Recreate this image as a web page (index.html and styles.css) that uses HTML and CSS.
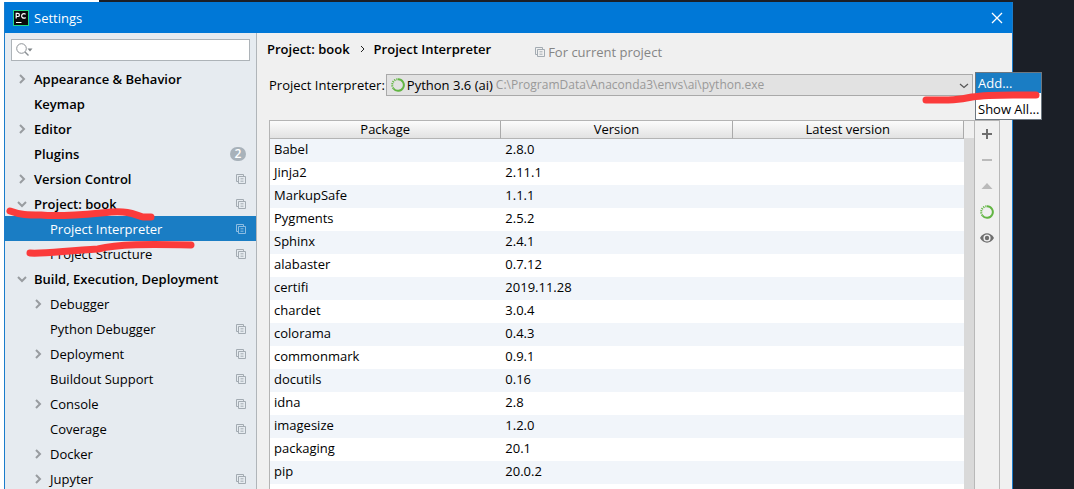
FILE: index.html
```
<!DOCTYPE html>
<html lang="en">
<head>
<meta charset="utf-8">
<title>Settings</title>
<link rel="stylesheet" href="styles.css">
</head>
<body>
<svg class="defs" aria-hidden="true">
  <symbol id="right" viewBox="0 0 10 10"><path d="M3 1l4 4-4 4" fill="none" stroke="#989ca0" stroke-width="2"/></symbol>
  <symbol id="down" viewBox="0 0 10 10"><path d="M1 3l4 4 4-4" fill="none" stroke="#989ca0" stroke-width="2"/></symbol>
  <symbol id="copy" viewBox="0 0 10 10"><path d="M2.5 7.5h-2v-7h7v2M2.5 2.5h7v7h-7zM4.5 4.8h3M4.5 7.2h3" fill="none" stroke="currentColor"/></symbol>
  <symbol id="ring" viewBox="0 0 14 14"><path d="M7 1.2a5.8 5.8 0 1 1-4.6 9.3" fill="none" stroke="#62b543" stroke-width="2"/><path d="M2.4 10.5A5.8 5.8 0 0 1 7 1.2" fill="none" stroke="#62b543" stroke-width="2" stroke-dasharray="1.2 1"/></symbol>
</svg>
<div class="desktop">
  <div class="strip"></div>
  <div class="window">
    <header class="titlebar">
      <svg class="logo" viewBox="0 0 16 16" aria-hidden="true"><rect width="16" height="16" fill="#21d789"/><rect x="1" y="1" width="14" height="14" fill="#0b0b0b"/><path d="M3.2 8.5V3.3h1.6a1.5 1.5 0 0 1 0 3.2H3.2M12.6 4.3a2.3 2.3 0 1 0 0 3.2M3 12.5h5.500" fill="none" stroke="#fff" stroke-width="1.200"/></svg>
      <h1 class="title">Settings</h1>
      <button class="close" aria-label="Close"><svg viewBox="0 0 12 12"><path d="M1 1l10 10M11 1L1 11" stroke="#fff" stroke-width="1.300"/></svg></button>
    </header>
    <div class="content">
      <nav class="sidebar">
        <label class="search">
          <svg viewBox="0 0 17 14" aria-hidden="true"><circle cx="5.500" cy="5.500" r="4.800" fill="none" stroke="#8c9196"/><path d="M9 9l3.500 3.500" stroke="#8c9196" stroke-width="1.400"/><path d="M11.500 5.500h5l-2.500 3z" fill="#7f8488"/></svg>
          <input type="search" aria-label="Search settings">
        </label>
        <ul class="tree">
          <li><a class="row top" href="#"><svg class="arrow"><use href="#right"/></svg><span>Appearance &amp; Behavior</span></a></li>
          <li><a class="row top" href="#"><i class="arrow"></i><span>Keymap</span></a></li>
          <li><a class="row top" href="#"><svg class="arrow"><use href="#right"/></svg><span>Editor</span></a></li>
          <li><a class="row top" href="#"><i class="arrow"></i><span>Plugins</span><b class="count">2</b></a></li>
          <li><a class="row top" href="#"><svg class="arrow"><use href="#right"/></svg><span>Version Control</span><svg class="copy"><use href="#copy"/></svg></a></li>
          <li><a class="row top" href="#"><svg class="arrow"><use href="#down"/></svg><span>Project: book</span><svg class="copy"><use href="#copy"/></svg></a></li>
          <li class="marked"><a class="row sub selected" href="#" aria-current="page"><i class="arrow"></i><span>Project Interpreter</span><svg class="copy"><use href="#copy"/></svg></a>
            <svg class="mark mark-tree" viewBox="0 0 200 60" aria-hidden="true"><path d="M5 11C16 15 22 15 36 15C58 17 83 14 106 12C124 11 128 14 138 17H146M25 53C38 54 58 51 93 49C113 44 143 44 186 45"/></svg></li>
          <li><a class="row sub" href="#"><i class="arrow"></i><span>Project Structure</span><svg class="copy"><use href="#copy"/></svg></a></li>
          <li><a class="row top" href="#"><svg class="arrow"><use href="#down"/></svg><span>Build, Execution, Deployment</span></a></li>
          <li><a class="row sub" href="#"><svg class="arrow"><use href="#right"/></svg><span>Debugger</span></a></li>
          <li><a class="row sub" href="#"><i class="arrow"></i><span>Python Debugger</span><svg class="copy"><use href="#copy"/></svg></a></li>
          <li><a class="row sub" href="#"><svg class="arrow"><use href="#right"/></svg><span>Deployment</span><svg class="copy"><use href="#copy"/></svg></a></li>
          <li><a class="row sub" href="#"><i class="arrow"></i><span>Buildout Support</span><svg class="copy"><use href="#copy"/></svg></a></li>
          <li><a class="row sub" href="#"><svg class="arrow"><use href="#right"/></svg><span>Console</span><svg class="copy"><use href="#copy"/></svg></a></li>
          <li><a class="row sub" href="#"><i class="arrow"></i><span>Coverage</span><svg class="copy"><use href="#copy"/></svg></a></li>
          <li><a class="row sub" href="#"><svg class="arrow"><use href="#right"/></svg><span>Docker</span></a></li>
          <li><a class="row sub" href="#"><svg class="arrow"><use href="#right"/></svg><span>Jupyter</span><svg class="copy"><use href="#copy"/></svg></a></li>
        </ul>
      </nav>
      <main class="main">
        <div class="crumbs">
          <h2 class="crumb">Project: book</h2>
          <svg class="sep" viewBox="0 0 6 8" aria-hidden="true"><path d="M1 1l3 3-3 3" fill="none" stroke="#222"/></svg>
          <h2 class="crumb">Project Interpreter</h2>
          <p class="scope"><svg class="copy"><use href="#copy"/></svg>For current project</p>
        </div>
        <div class="picker">
          <label for="interpreter">Project Interpreter:</label>
          <div class="combo">
            <select id="interpreter"><option>Python 3.6 (ai)</option></select>
            <svg class="combo-icon" aria-hidden="true"><use href="#ring"/></svg>
            <span class="path">C:\ProgramData\Anaconda3\envs\ai\python.exe</span>
            <svg class="combo-arrow" viewBox="0 0 10 6" aria-hidden="true"><path d="M1 1l4 3.500L9 1" fill="none" stroke="#555" stroke-width="1.200"/></svg>
          </div>
          <div class="menu">
            <button class="item active">Add...</button>
            <button class="item">Show All...</button>
            <svg class="mark mark-menu" viewBox="0 0 130 20" aria-hidden="true"><path d="M4 10C23 10 33 11 50 7C68 4 88 5 114 5"/></svg>
          </div>
        </div>
        <div class="packages">
          <div class="listing">
            <table class="table">
              <thead><tr><th>Package</th><th>Version</th><th>Latest version</th></tr></thead>
              <tbody>
                <tr><td>Babel</td><td>2.8.0</td><td></td></tr>
                <tr><td>Jinja2</td><td>2.11.1</td><td></td></tr>
                <tr><td>MarkupSafe</td><td>1.1.1</td><td></td></tr>
                <tr><td>Pygments</td><td>2.5.2</td><td></td></tr>
                <tr><td>Sphinx</td><td>2.4.1</td><td></td></tr>
                <tr><td>alabaster</td><td>0.7.12</td><td></td></tr>
                <tr><td>certifi</td><td>2019.11.28</td><td></td></tr>
                <tr><td>chardet</td><td>3.0.4</td><td></td></tr>
                <tr><td>colorama</td><td>0.4.3</td><td></td></tr>
                <tr><td>commonmark</td><td>0.9.1</td><td></td></tr>
                <tr><td>docutils</td><td>0.16</td><td></td></tr>
                <tr><td>idna</td><td>2.8</td><td></td></tr>
                <tr><td>imagesize</td><td>1.2.0</td><td></td></tr>
                <tr><td>packaging</td><td>20.1</td><td></td></tr>
                <tr><td>pip</td><td>20.0.2</td><td></td></tr>
              </tbody>
            </table>
          </div>
          <div class="scrollbar"></div>
          <div class="tools">
            <button aria-label="Add"><svg viewBox="0 0 14 14"><path d="M7 2v10M2 7h10" stroke="#6e6e6e" stroke-width="2"/></svg></button>
            <button aria-label="Remove"><svg viewBox="0 0 14 14"><path d="M2 7h10" stroke="#bababa" stroke-width="2"/></svg></button>
            <button aria-label="Upgrade"><svg viewBox="0 0 14 14"><path d="M1.500 10h11L7 4z" fill="#bababa"/></svg></button>
            <button aria-label="Use Conda"><svg><use href="#ring"/></svg></button>
            <button aria-label="Show early releases"><svg viewBox="0 0 14 14"><path d="M0 7C3.500 .8 10.500 .8 14 7C10.500 13.200 3.500 13.200 0 7z" fill="#6e6e6e"/><circle cx="7" cy="7" r="3.600" fill="#f0f0f0"/><circle cx="7" cy="7" r="2.200" fill="#6e6e6e"/></svg></button>
          </div>
        </div>
      </main>
    </div>
  </div>
</div>
</body>
</html>
```
FILE: styles.css
```
* { box-sizing: border-box; }
body {
  margin: 0;
  overflow: hidden;
  background: #1b1f27;
  color: #000;
  font: 13px/20px "Open Sans", "Noto Sans", sans-serif;
}
.defs { position: absolute; width: 0; height: 0; }
svg { display: block; flex: none; }
button { padding: 0; border: 0; background: none; font: inherit; color: inherit; }
h1, h2, p, ul { margin: 0; padding: 0; font-size: inherit; }

.desktop {
  display: flex;
  flex-direction: column;
  height: 100vh;
  padding-right: 61px;
  border-left: 4px solid #fff;
}
.strip { flex: none; width: 95px; height: 2px; background: #fff; }
.window {
  display: flex;
  flex: 1;
  flex-direction: column;
  min-height: 0;
  border: 1px solid #1a7ccb;
  border-width: 0 1px;
  background: #f0f0f0;
}
.titlebar {
  display: flex;
  flex: none;
  align-items: center;
  gap: 5px;
  height: 31px;
  padding: 0 9px 0 8px;
  background: #0078d7;
  color: #fff;
}
.logo { width: 16px; height: 16px; }
.title { flex: 1; font-weight: 400; }
.close svg { width: 12px; height: 12px; }

.content { display: flex; flex: 1; min-height: 0; }
.sidebar {
  flex: none;
  width: 252px;
  padding-top: 6px;
  border-right: 1px solid #b0b5b9;
  background: #e6ebf0;
}
.search {
  display: flex;
  align-items: center;
  height: 22px;
  margin: 0 6px 5px;
  padding-left: 4px;
  border: 1px solid #adb3b8;
  background: #fff;
}
.search svg { width: 17px; height: 14px; }
.search input { flex: 1; min-width: 0; border: 0; outline: 0; background: none; font: inherit; }

.tree { list-style: none; }
.row {
  display: flex;
  align-items: center;
  height: 25px;
  padding: 0 10px 0 12px;
  color: inherit;
  line-height: 18px;
  text-decoration: none;
}
.row span { flex: 1; white-space: nowrap; }
.top { font-weight: 600; }
.sub { padding-left: 28px; }
.selected { background: #1a7dc4; color: #fff; }
.arrow { flex: none; width: 10px; height: 10px; margin-right: 7px; }
.copy { width: 10px; height: 10px; color: #a3abb2; }
.selected .copy { color: #8dbde2; }
.count {
  width: 16px;
  height: 14px;
  border-radius: 7px;
  background: #a8b2ba;
  color: #fff;
  font-size: 12px;
  font-weight: 600;
  line-height: 14px;
  text-align: center;
}

.marked { position: relative; }
.mark {
  position: absolute;
  z-index: 2;
  fill: none;
  stroke: #fb3b3b;
  stroke-width: 7;
  stroke-linecap: round;
  stroke-linejoin: round;
  pointer-events: none;
}
.mark-tree { top: -16px; left: 0; width: 200px; height: 60px; }
.mark-menu { top: 17px; left: -54px; width: 130px; height: 20px; }

.main { display: flex; flex: 1; flex-direction: column; min-width: 0; padding: 6px 12px 0; }
.crumbs { display: flex; align-items: center; height: 20px; margin-left: -2px; white-space: nowrap; }
.crumb { font-weight: 600; }
.sep { width: 6px; height: 8px; margin: 0 8px 0 10px; }
.scope { display: flex; align-items: center; gap: 3px; margin: 6px 0 0 44px; color: #858585; }

.picker { position: relative; display: flex; align-items: center; gap: 1px; height: 22px; margin-top: 15px; white-space: nowrap; }
.combo { position: relative; flex: 1; margin-right: 27px; height: 22px; }
.combo select {
  width: 100%;
  height: 22px;
  padding: 0 0 0 20px;
  border: 1px solid #a9a9a9;
  border-radius: 0;
  background: #e2e2e2;
  color: #000;
  font: inherit;
  appearance: none;
}
.combo-icon { position: absolute; top: 4px; left: 5px; width: 14px; height: 14px; }
.path { position: absolute; top: 1px; left: 110px; color: #999; font-size: 12px; pointer-events: none; }
.combo-arrow { position: absolute; top: 9px; right: 4px; width: 10px; height: 6px; }
.menu {
  position: absolute;
  z-index: 1;
  top: -2px;
  right: -42px;
  width: 67px;
  border: 1px solid #6d7780;
  background: #fff;
}
.item { display: block; width: 100%; height: 20px; padding: 0 2px; text-align: left; }
.item + .item { margin-top: 6px; }
.active { background: #1a7dc4; color: #fff; }

.packages { display: flex; flex: 1; min-height: 0; margin-top: 24px; border-top: 1px solid #b4b4b4; border-left: 1px solid #b4b4b4; }
.listing { flex: 1; min-width: 0; background: #fff; overflow: hidden; }
.table { width: 100%; border-collapse: separate; border-spacing: 0; table-layout: fixed; }
.table th {
  height: 18px;
  padding: 0;
  border-right: 1px solid #aaa;
  border-bottom: 1px solid #b4b4b4;
  background: linear-gradient(#fcfcfc, #e2e2e2);
  font-weight: 400;
  line-height: 17px;
}
.table td { height: 23px; padding: 0 4px 3px; line-height: 20px; }
.table tbody tr:nth-child(odd) { background: #f1f5fa; }
.scrollbar { width: 10px; margin-top: 17px; background: #d9d9d9; }
.tools {
  display: flex;
  flex-direction: column;
  align-items: center;
  width: 26px;
  border: 1px solid #b8b8b8;
  border-width: 0 1px;
}
.tools button { display: grid; place-items: center; flex: none; width: 24px; height: 26px; }
.tools svg { width: 14px; height: 14px; }
```
